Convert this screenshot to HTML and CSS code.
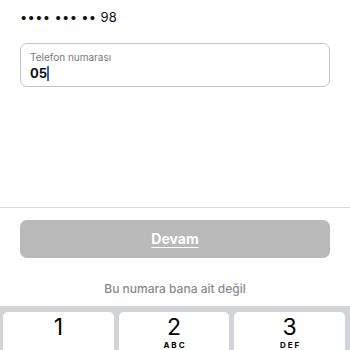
FILE: index.html
```html
<!DOCTYPE html>
<html lang="tr">
<head>
<meta charset="utf-8">
<link rel="stylesheet" href="styles.css">
</head>
<body>
<div class="screen">
  <div class="top">
    <div class="masked">•••• ••• •• 98</div>
    <div class="field">
      <div class="label">Telefon numarası</div>
      <div class="value">05<span class="caret"></span></div>
    </div>
  </div>
  <div class="bottom">
    <div class="btn">Devam</div>
    <div class="alt">Bu numara bana ait değil</div>
  </div>
  <div class="keyboard">
    <div class="key"><span class="num">1</span></div>
    <div class="key"><span class="num">2</span><span class="letters">ABC</span></div>
    <div class="key"><span class="num">3</span><span class="letters">DEF</span></div>
  </div>
</div>
</body>
</html>
```
FILE: styles.css
```css
* { box-sizing: border-box; }
html, body { margin: 0; padding: 0; background: #fff; }
body { font-family: Inter, "Noto Sans", sans-serif; color: #111; }
.screen { width: 350px; height: 350px; overflow: hidden; display: flex; flex-direction: column; }
.top { padding: 9px 20px 0; height: 209px; border-bottom: 1px solid #dcdcdc; }
.masked { font-size: 13px; line-height: 17px; letter-spacing: 0.3px; color: #111; }
.field { margin-top: 17px; height: 44px; border: 1px solid #c4c4c4; border-radius: 7px; padding: 7px 9px 0; }
.label { font-size: 10px; line-height: 13px; color: #7a7a7a; }
.value { font-size: 13px; font-weight: 700; line-height: 16px; margin-top: 1px; display: flex; align-items: center; }
.caret { display: inline-block; width: 2px; height: 15px; background: #3a63d8; }
.bottom { padding: 12px 20px 0; height: 99px; }
.btn { height: 38px; border-radius: 7px; background: #b9b9b9; color: #fff; font-weight: 700; font-size: 14px; display: flex; align-items: center; justify-content: center; text-decoration: underline; text-underline-offset: 3px; }
.alt { text-align: center; color: #8a8a8a; font-size: 12px; font-weight: 500; margin-top: 23px; }
.keyboard { flex: 1; background: #d2d4d9; display: grid; grid-template-columns: repeat(3, 1fr); gap: 5px; padding: 6px 5px 0 3px; }
.key { background: #fff; border-radius: 5px 5px 0 0; display: flex; flex-direction: column; align-items: center; padding-top: 5px; }
.num { font-size: 23px; line-height: 21px; font-weight: 400; color: #000; }
.letters { font-size: 8px; font-weight: 700; letter-spacing: 2px; line-height: 10px; margin-top: 2px; margin-left: 2px; color: #000; }
```
